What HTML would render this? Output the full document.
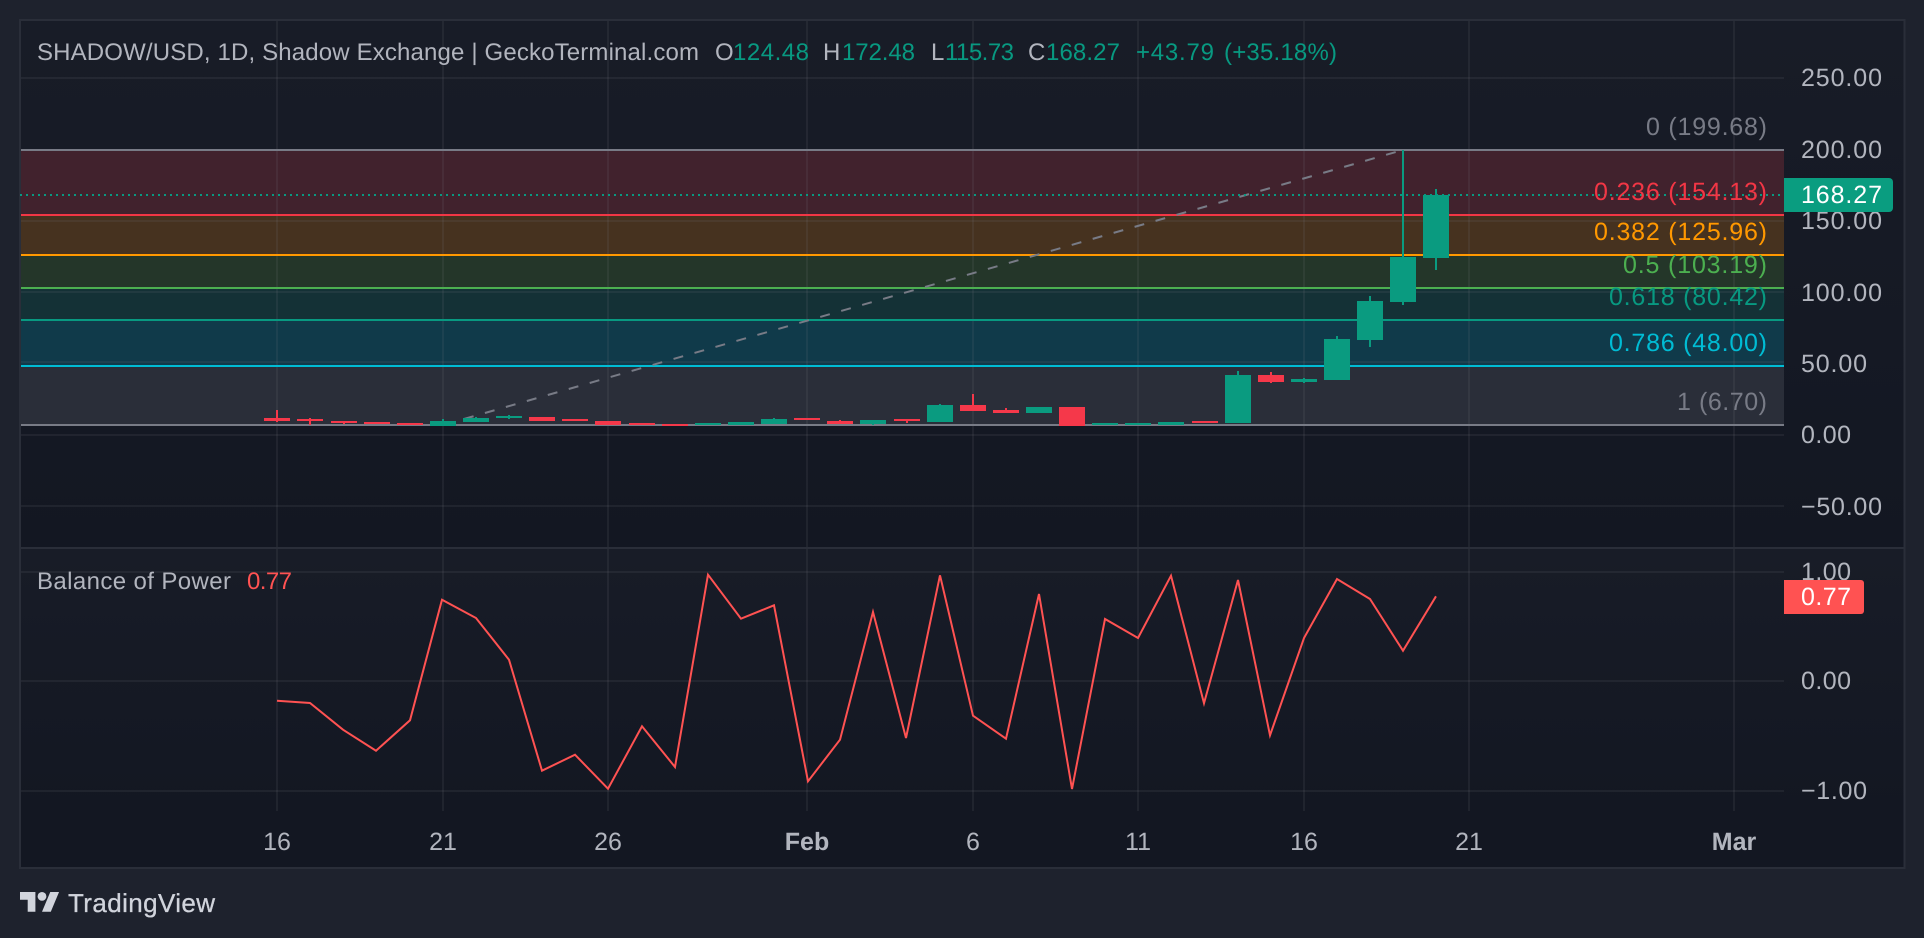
<!DOCTYPE html>
<html lang="en">
<head>
<meta charset="utf-8">
<title>SHADOW/USD</title>
<style>
html,body{margin:0;padding:0;width:1924px;height:938px;overflow:hidden;background:#1e222d}
svg{display:block}
text{font-family:"Liberation Sans",Arial,sans-serif;text-rendering:geometricPrecision}
.t{font-size:24px;fill:#b2b5be}
.g{font-size:24px;fill:#089981}
.a{font-size:25px;fill:#b2b5be}
.f{font-size:25px}
.x{font-size:25px;fill:#b2b5be;text-anchor:middle}
</style>
</head>
<body>
<svg width="1924" height="938" viewBox="0 0 1924 938" xmlns="http://www.w3.org/2000/svg">
<defs>
<linearGradient id="bg" x1="0" y1="0" x2="0" y2="1"><stop offset="0" stop-color="#181c27"/><stop offset="1" stop-color="#131722"/></linearGradient>
</defs>
<rect width="1924" height="938" fill="#1e222d"/>
<rect x="20" y="20" width="1884.5" height="848" fill="#131722" stroke="#2a2e39" stroke-width="2"/>
<rect x="21" y="21" width="1882.5" height="526" fill="url(#bg)"/>
<rect x="21" y="549" width="1882.5" height="262" fill="url(#bg)"/>

<!-- fib zones -->
<rect x="21" y="150" width="1763" height="65" fill="#41222d"/>
<rect x="21" y="215" width="1763" height="40" fill="#46321f"/>
<rect x="21" y="255" width="1763" height="33" fill="#243629"/>
<rect x="21" y="288" width="1763" height="32" fill="#143136"/>
<rect x="21" y="320" width="1763" height="46" fill="#103a4a"/>
<rect x="21" y="366" width="1763" height="59" fill="#2a2e39"/>

<!-- grid -->
<g stroke="#787b86" stroke-opacity=".13" stroke-width="2" fill="none">
<path d="M21 78H1784M21 221H1784M21 292H1784M21 362H1784M21 435H1784M21 506H1784M21 572H1784M21 681H1784M21 791H1784"/>
<path d="M277 21V811M443 21V811M608 21V811M807 21V811M973 21V811M1138 21V811M1304 21V811M1469 21V811M1734 21V811"/>
</g>
<rect x="21" y="547" width="1883" height="2" fill="#2a2e39"/>

<!-- fib lines -->
<g stroke-width="2" fill="none">
<path d="M21 150H1784" stroke="#787b86"/>
<path d="M21 215H1784" stroke="#f23645"/>
<path d="M21 255H1784" stroke="#ff9800"/>
<path d="M21 288H1784" stroke="#4caf50"/>
<path d="M21 320H1784" stroke="#089981"/>
<path d="M21 366H1784" stroke="#00bcd4"/>
<path d="M21 425H1784" stroke="#787b86"/>
<path d="M443 425L1403 150" stroke="#787b86" stroke-dasharray="10 11.8"/>
</g>

<!-- candles -->
<path fill="#f5384a" d="M264 418h26v3h-26zM276 410h2v12h-2zM297 419h26v2h-26zM309 418h2v7h-2zM331 421h26v2h-26zM343 421h2v3h-2zM364 422h26v2h-26zM397 423h26v2h-26zM529 417h26v4h-26zM562 419h26v2h-26zM595 421h26v4h-26zM629 423h26v2h-26zM662 424h26v2h-26zM794 418h26v2h-26zM827 421h26v3h-26zM839 420h2v2h-2zM894 419h26v2h-26zM906 420h2v3h-2zM960 405h26v6h-26zM972 394h2v12h-2zM993 410h26v3h-26zM1005 408h2v3h-2zM1059 407h26v19h-26zM1192 421h26v2h-26zM1258 375h26v7h-26zM1270 372h2v11h-2z"/>
<path fill="#0a9b80" d="M430 421h26v5h-26zM442 419h2v3h-2zM463 418h26v4h-26zM475 417h2v2h-2zM496 416h26v2h-26zM508 415h2v4h-2zM695 423h26v2h-26zM728 422h26v3h-26zM761 419h26v5h-26zM773 418h2v2h-2zM860 420h26v4h-26zM872 423h2v2h-2zM927 405h26v17h-26zM939 404h2v2h-2zM1026 407h26v6h-26zM1092 423h26v2h-26zM1125 423h26v2h-26zM1158 422h26v3h-26zM1225 375h26v48h-26zM1237 371h2v5h-2zM1291 379h26v3h-26zM1303 378h2v5h-2zM1324 339h26v41h-26zM1336 336h2v4h-2zM1357 301h26v39h-26zM1369 296h2v51h-2zM1390 257h26v45h-26zM1402 150h2v155h-2zM1423 195h26v63h-26zM1435 189h2v81h-2z"/>

<!-- last price dotted -->
<path d="M20 195H1784" stroke="#089981" stroke-width="2" stroke-dasharray="2 4" fill="none"/>

<!-- BoP line -->
<polyline fill="none" stroke="#ff5252" stroke-width="2" stroke-linejoin="miter" points="277,700.7 310,703 343,729.7 376,750.7 410,720.3 442,599.7 476,618 509,659.7 542,770.7 575,754.7 608,788.7 642,726.3 675,767 708,574.7 741,618.7 774,605.3 808,781.3 840,739.7 873,612 906,738 940,575.3 973,715.7 1006,738.7 1039,594 1072,789 1105,619 1138,638 1171,575.7 1204,703.3 1238,580 1270,735.3 1304,638 1337,579 1370,599 1403,650.7 1436,596.3"/>

<!-- legend -->
<text class="t" x="37" y="60" textLength="662" lengthAdjust="spacing">SHADOW/USD, 1D, Shadow Exchange | GeckoTerminal.com</text>
<text class="t" x="715" y="60" textLength="17">O</text>
<text class="g" x="733" y="60" textLength="76">124.48</text>
<text class="t" x="823" y="60" textLength="17">H</text>
<text class="g" x="842" y="60" textLength="73">172.48</text>
<text class="t" x="931" y="60" textLength="13">L</text>
<text class="g" x="945" y="60" textLength="69">115.73</text>
<text class="t" x="1028" y="60" textLength="17">C</text>
<text class="g" x="1046" y="60" textLength="74">168.27</text>
<text class="g" x="1136" y="60" textLength="78">+43.79</text>
<text class="g" x="1224" y="60" textLength="113">(+35.18%)</text>

<text class="t" x="37" y="589" textLength="194">Balance of Power</text>
<text class="t" x="247" y="589" textLength="45" style="fill:#ff5252">0.77</text>

<!-- fib labels -->
<text class="f" x="1646" y="135" textLength="121" fill="#787b86">0 (199.68)</text>
<text class="f" x="1594" y="200" textLength="173" fill="#f23645">0.236 (154.13)</text>
<text class="f" x="1594" y="240" textLength="173" fill="#ff9800">0.382 (125.96)</text>
<text class="f" x="1623" y="273" textLength="144" fill="#4caf50">0.5 (103.19)</text>
<text class="f" x="1609" y="305" textLength="158" fill="#089981">0.618 (80.42)</text>
<text class="f" x="1609" y="351" textLength="158" fill="#00bcd4">0.786 (48.00)</text>
<text class="f" x="1677" y="410" textLength="90" fill="#787b86">1 (6.70)</text>

<!-- price axis -->
<text class="a" x="1801" y="86" textLength="81">250.00</text>
<text class="a" x="1801" y="158" textLength="81">200.00</text>
<text class="a" x="1801" y="229" textLength="81">150.00</text>
<text class="a" x="1801" y="301" textLength="81">100.00</text>
<text class="a" x="1801" y="372" textLength="66">50.00</text>
<text class="a" x="1801" y="443" textLength="50">0.00</text>
<text class="a" x="1801" y="515" textLength="81">−50.00</text>
<text class="a" x="1801" y="580" textLength="50">1.00</text>
<text class="a" x="1801" y="689" textLength="50">0.00</text>
<text class="a" x="1801" y="799" textLength="66">−1.00</text>

<!-- badges -->
<path d="M1784 178H1889a4 4 0 0 1 4 4V208a4 4 0 0 1-4 4H1784z" fill="#0a9d80"/>
<text x="1801" y="203" font-size="25" fill="#fff" textLength="81">168.27</text>
<path d="M1784 580H1861a3 3 0 0 1 3 3V611a3 3 0 0 1-3 3H1784z" fill="#ff5252"/>
<text x="1801" y="605" font-size="25" fill="#fff" textLength="50">0.77</text>

<!-- time axis -->
<text class="x" x="277" y="850">16</text>
<text class="x" x="443" y="850">21</text>
<text class="x" x="608" y="850">26</text>
<text class="x" x="807" y="850" font-weight="bold">Feb</text>
<text class="x" x="973" y="850">6</text>
<text class="x" x="1138" y="850">11</text>
<text class="x" x="1304" y="850">16</text>
<text class="x" x="1469" y="850">21</text>
<text class="x" x="1734" y="850" font-weight="bold">Mar</text>

<!-- logo -->
<g transform="translate(20 887.6) scale(1.1)" fill="#d1d4dc">
<path d="M14 22H7V11H0V4h14v18zM28 22h-8l7.5-18h8L28 22z"/>
<circle cx="20" cy="8" r="4"/>
</g>
<text x="68" y="912" font-size="26" fill="#d1d4dc" stroke="#d1d4dc" stroke-width=".3" textLength="147">TradingView</text>
</svg>
</body>
</html>
